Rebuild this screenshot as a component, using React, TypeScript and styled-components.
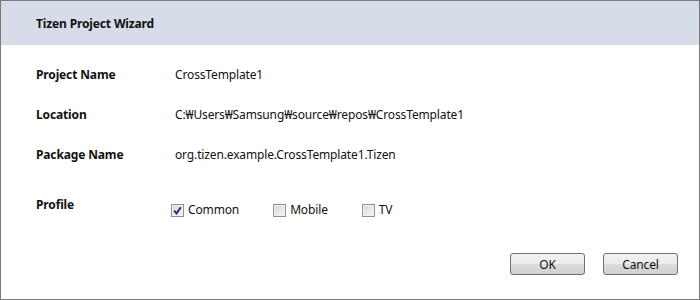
import styled, { createGlobalStyle } from "styled-components";

const GlobalStyle = createGlobalStyle`
  html, body {
    margin: 0;
    padding: 0;
    background: #ffffff;
  }
  body {
    font-family: "Noto Sans", "Noto Sans CJK KR", sans-serif;
    font-size: 12px;
    letter-spacing: -0.14px;
    color: #111;
  }
`;

const Dialog = styled.div`
  box-sizing: border-box;
  width: 700px;
  height: 300px;
  border: 1px solid #7a7a7a;
  display: flex;
  flex-direction: column;
  background: #fff;
`;

const TitleBar = styled.div`
  height: 44px;
  background: #d6dce8;
  display: flex;
  align-items: center;
  padding: 1px 0 0 35px;
  box-sizing: border-box;
  font-weight: 700;
  font-size: 12px;
`;

const Form = styled.div`
  padding: 10px 0 0 35px;
  display: flex;
  flex-direction: column;
`;

const Row = styled.div<{ $top?: number }>`
  display: flex;
  align-items: flex-start;
  height: 40px;
  padding-top: ${(p) => p.$top ?? 12}px;
  box-sizing: border-box;
  line-height: 16px;
`;

const Label = styled.div`
  width: 139px;
  font-weight: 700;
`;

const Value = styled.div``;

const Options = styled.div`
  display: flex;
  gap: 34px;
  margin: 5px 0 0 -4px;
`;

const Option = styled.label`
  display: flex;
  align-items: center;
  gap: 4px;
`;

const Box = styled.span`
  box-sizing: border-box;
  width: 13px;
  height: 13px;
  border: 1px solid #8e8f8f;
  background: linear-gradient(135deg, #d6d6d6, #f6f6f6);
  box-shadow: inset 0 0 0 1px #f2f2f2;
  display: flex;
  align-items: center;
  justify-content: center;
`;

const Footer = styled.div`
  margin-top: auto;
  display: flex;
  justify-content: flex-end;
  gap: 18px;
  padding: 0 21px 24px 0;
`;

const Button = styled.button`
  box-sizing: border-box;
  width: 75px;
  height: 22px;
  border: 1px solid #707070;
  border-radius: 3px;
  background: linear-gradient(#f2f2f2 0%, #ebebeb 50%, #dddddd 51%, #cfcfcf 100%);
  font-family: inherit;
  font-size: 12px;
  letter-spacing: inherit;
  color: #111;
  padding: 0;
`;

function Checkbox({ checked, label }: { checked?: boolean; label: string }) {
  return (
    <Option>
      <Box>
        {checked && (
          <svg width="9" height="9" viewBox="0 0 9 9">
            <path d="M1.2 4.6 L3.6 7.4 L7.8 1.2" fill="none" stroke="#25307a" strokeWidth="2" />
          </svg>
        )}
      </Box>
      {label}
    </Option>
  );
}

export default function App() {
  return (
    <>
      <GlobalStyle />
      <Dialog>
        <TitleBar>Tizen Project Wizard</TitleBar>
        <Form>
          <Row>
            <Label>Project Name</Label>
            <Value>CrossTemplate1</Value>
          </Row>
          <Row>
            <Label>Location</Label>
            <Value>C:₩Users₩Samsung₩source₩repos₩CrossTemplate1</Value>
          </Row>
          <Row>
            <Label>Package Name</Label>
            <Value>org.tizen.example.CrossTemplate1.Tizen</Value>
          </Row>
          <Row $top={22}>
            <Label>Profile</Label>
            <Options>
              <Checkbox checked label="Common" />
              <Checkbox label="Mobile" />
              <Checkbox label="TV" />
            </Options>
          </Row>
        </Form>
        <Footer>
          <Button>OK</Button>
          <Button>Cancel</Button>
        </Footer>
      </Dialog>
    </>
  );
}
